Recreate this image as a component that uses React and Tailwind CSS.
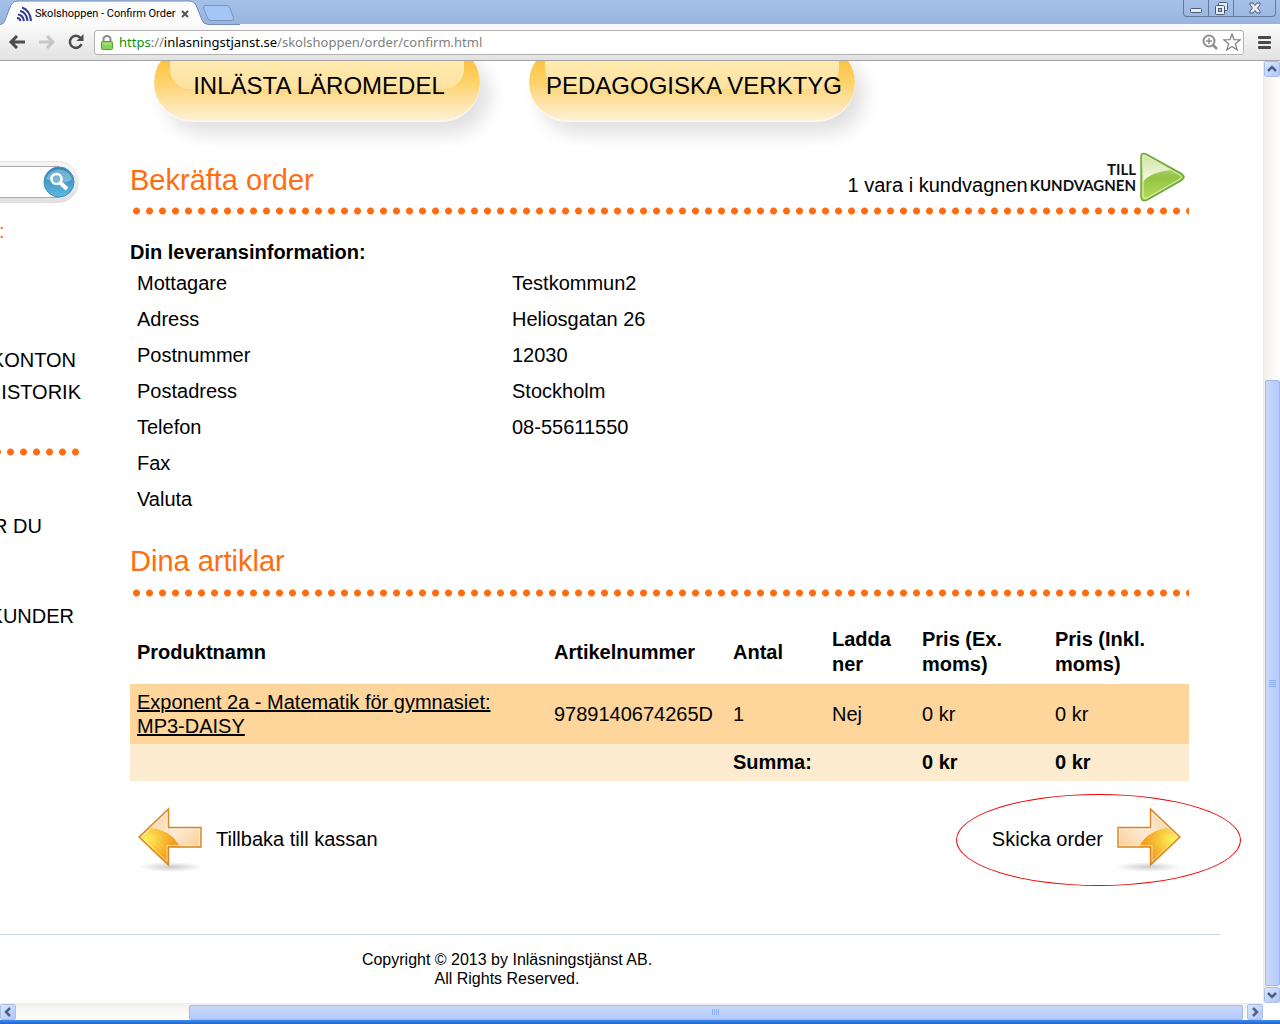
import React, { useState } from 'react';

const delivery = [
    ['Mottagare', 'Testkommun2'],
    ['Adress', 'Heliosgatan 26'],
    ['Postnummer', '12030'],
    ['Postadress', 'Stockholm'],
    ['Telefon', '08-55611550'],
    ['Fax', ''],
    ['Valuta', '']
];

const articles = [
    { name: 'Exponent 2a - Matematik för gymnasiet: MP3-DAISY', number: '9789140674265D', count: 1, download: 'Nej', exVat: '0 kr', incVat: '0 kr' }
];

function TitleBar() {
    return (
        <div className="h-6 flex items-start justify-between bg-linear-to-b from-[#a6c1e8] to-[#98b4de]">
            <div className="flex items-start">
                <div className="relative h-6 w-[206px]">
                    <svg className="absolute inset-0" width="240" height="25" viewBox="0 0 240 25" aria-hidden="true">
                        <path d="M0 25 C5 24 5 20 7 15 L11 5 Q13 1 17 1 H190 Q194 1 196 5 L202 20 Q203 24 208 25 Z" fill="#fbfbfb" />
                        <path d="M0 24.5 C5 24 5 20 7 15 L11 5 Q13 1 17 1 H190 Q194 1 196 5 L202 20 Q203 24 208 24.5 H240" fill="none" stroke="#6f8cb8" />
                        <path d="M206 5.500 H226 Q229 5.500 230 8 L233.500 18 Q234 20.500 231 20.500 H211 Q208.500 20.500 207.500 18 L203.500 8 Q203 5.500 206 5.500 Z" fill="#a3c6f7" stroke="#7894c0" />
                    </svg>
                    <div className="relative flex items-center h-6 pt-1 pl-4">
                        <svg width="16" height="16" viewBox="0 0 16 16" fill="none" stroke="#333c8f" strokeWidth="2" aria-hidden="true">
                            <path d="M1 12 Q4 12 4.500 15" />
                            <path d="M2 8.500 Q7 9 8 15" />
                            <path d="M4 5 Q10.500 6 11.500 15" />
                            <path d="M6 1.500 Q14 4 15 15" />
                        </svg>
                        <span className="ml-[3px] w-[138px] whitespace-nowrap font-['Roboto',sans-serif] text-[11px] leading-4 text-black">Skolshoppen - Confirm Order</span>
                        <button type="button" aria-label="Stäng flik" className="ml-2">
                            <svg width="8" height="8" viewBox="0 0 8 8" stroke="#555" strokeWidth="2"><path d="M1 1 L7 7 M7 1 L1 7" /></svg>
                        </button>
                    </div>
                </div>
            </div>
            <div className="flex h-[17px] mr-1 border border-t-0 border-[#64799b] rounded-b-sm divide-x divide-[#64799b]">
                <button type="button" aria-label="Minimera" className="w-[25px] flex items-center justify-center">
                    <svg width="12" height="12" viewBox="0 0 12 12"><rect x="0.500" y="6.500" width="11" height="4" rx="1" fill="#e6ecf5" stroke="#4a5870" /></svg>
                </button>
                <button type="button" aria-label="Återställ" className="w-[25px] flex items-center justify-center">
                    <svg width="13" height="13" viewBox="0 0 13 13" fill="#e6ecf5" stroke="#4a5870">
                        <rect x="3.500" y="0.500" width="9" height="8" rx="1" />
                        <rect x="0.500" y="3.500" width="9" height="9" rx="1" />
                        <rect x="3.500" y="6.500" width="3" height="3" fill="#a6c1e8" />
                    </svg>
                </button>
                <button type="button" aria-label="Stäng" className="w-[41px] flex items-center justify-center">
                    <svg width="12" height="12" viewBox="0 0 12 12">
                        <path d="M1 1 H4 L6 3.500 L8 1 H11 V3 L8.500 6 L11 9 V11 H8 L6 8.500 L4 11 H1 V9 L3.500 6 L1 3 Z" fill="#e6ecf5" stroke="#4a5870" />
                    </svg>
                </button>
            </div>
        </div>
    );
}

function Toolbar() {
    return (
        <div className="h-[37px] flex items-center pl-2 pr-[9px] bg-linear-to-b from-[#fbfbfb] to-[#e2e2e2] border-b border-[#a3a3a3]">
            <button type="button" aria-label="Tillbaka" className="w-[18px]">
                <svg width="18" height="14" viewBox="0 0 18 14" fill="none" stroke="#4d4d4d" strokeWidth="3"><path d="M17 7 H4 M9 1 L3 7 L9 13" /></svg>
            </button>
            <button type="button" aria-label="Framåt" className="ml-3 w-[18px]">
                <svg width="18" height="14" viewBox="0 0 18 14" fill="none" stroke="#c6c6c6" strokeWidth="3"><path d="M1 7 H14 M9 1 L15 7 L9 13" /></svg>
            </button>
            <button type="button" aria-label="Ladda om" className="ml-3 w-4">
                <svg width="16" height="16" viewBox="0 0 16 16">
                    <path d="M12.500 4 A6 6 0 1 0 13.500 10" fill="none" stroke="#4d4d4d" strokeWidth="2.500" />
                    <path d="M15.500 0 V7 H8.500 Z" fill="#4d4d4d" />
                </svg>
            </button>
            <div className="ml-[10px] flex-1 flex items-center h-[25px] pl-[6px] pr-[2px] bg-white border border-[#b3b3b3] rounded-[3px]">
                <svg width="12" height="15" viewBox="0 0 12 15" aria-hidden="true">
                    <path d="M2.500 7 V4 A3.500 3 0 0 1 9.500 4 V7" fill="none" stroke="#8c8c8c" strokeWidth="2" />
                    <rect x="0.500" y="6.500" width="11" height="8" rx="1" fill="#86d35c" stroke="#55a332" />
                    <path d="M2 9 H10" stroke="#b6ec98" />
                </svg>
                <div className="ml-[6px] flex-1 text-[13px] leading-5 text-[#808080] whitespace-nowrap">
                    <span className="text-[#0a950a]">https</span>://<span className="text-black">inlasningstjanst.se</span>/skolshoppen/order/confirm.html
                </div>
                <button type="button" aria-label="Zooma">
                    <svg width="16" height="16" viewBox="0 0 16 16" fill="none" stroke="#8f8f8f">
                        <circle cx="7" cy="7" r="5.500" strokeWidth="2" />
                        <path d="M4 7 H10 M7 4 V10" strokeWidth="1.500" />
                        <path d="M11 11 L15 15" strokeWidth="2.500" />
                    </svg>
                </button>
                <button type="button" aria-label="Bokmärk" className="ml-[5px]">
                    <svg width="18" height="18" viewBox="0 0 18 18" fill="white" stroke="#7d7d7d" strokeWidth="1.200">
                        <path d="M9 1 L11 6.700 L17.200 6.900 L12.300 10.700 L14.200 17 L9 13.400 L3.800 17 L5.700 10.700 L0.800 6.900 L7 6.700 Z" />
                    </svg>
                </button>
            </div>
            <button type="button" aria-label="Meny" className="ml-[14px] flex flex-col gap-[2px]">
                <span className="block w-[13px] h-[3px] rounded-[1px] bg-[#4a4a4a]" />
                <span className="block w-[13px] h-[3px] rounded-[1px] bg-[#4a4a4a]" />
                <span className="block w-[13px] h-[3px] rounded-[1px] bg-[#4a4a4a]" />
            </button>
        </div>
    );
}

function ScrollArrow({ label, d }) {
    return (
        <button type="button" aria-label={label} className="size-4 shrink-0 flex items-center justify-center rounded-[2px] border border-white bg-linear-to-br from-[#dbe6ff] to-[#b0c6f7] outline-1 -outline-offset-1 outline-[#a9bfec]">
            <svg width="10" height="10" viewBox="0 0 10 10" fill="none" stroke="#4d6185" strokeWidth="2.500"><path d={d} /></svg>
        </button>
    );
}

function VerticalScrollbar() {
    return (
        <div className="w-[17px] shrink-0 flex flex-col items-center border-l border-[#eeede5] bg-linear-to-r from-[#f3f1ec] to-[#fefefb]">
            <ScrollArrow label="Upp" d="M1 7 L5 3 L9 7" />
            <div className="grow-[304] basis-0" />
            <div className="grow-[605] basis-0 w-[15px] flex flex-col items-center justify-center gap-px rounded-[2px] border border-[#a0b8ea] bg-linear-to-r from-[#c9d7fc] to-[#b5cbfb]">
                <span className="w-[7px] h-px bg-[#8cb0f8]" />
                <span className="w-[7px] h-px bg-[#8cb0f8]" />
                <span className="w-[7px] h-px bg-[#8cb0f8]" />
                <span className="w-[7px] h-px bg-[#8cb0f8]" />
            </div>
            <div className="h-px" />
            <ScrollArrow label="Ned" d="M1 3 L5 7 L9 3" />
        </div>
    );
}

function HorizontalScrollbar() {
    return (
        <div className="flex h-[17px] bg-white">
            <div className="flex-1 flex items-center border-t border-[#eeede5] bg-linear-to-b from-[#f3f1ec] to-[#fefefb]">
                <ScrollArrow label="Vänster" d="M7 1 L3 5 L7 9" />
                <div className="grow-[173] basis-0" />
                <div className="grow-[1053] basis-0 h-[15px] flex items-center justify-center gap-px rounded-[2px] border border-[#a0b8ea] bg-linear-to-b from-[#c9d7fc] to-[#b5cbfb]">
                    <span className="h-[6px] w-px bg-[#8cb0f8]" />
                    <span className="h-[6px] w-px bg-[#8cb0f8]" />
                    <span className="h-[6px] w-px bg-[#8cb0f8]" />
                    <span className="h-[6px] w-px bg-[#8cb0f8]" />
                </div>
                <div className="w-1" />
                <ScrollArrow label="Höger" d="M3 1 L7 5 L3 9" />
            </div>
            <div className="w-[17px]" />
        </div>
    );
}

function PillButton({ children }) {
    return (
        <button type="button" className="relative w-[326px] h-[78px] rounded-full border-b-2 border-[#fdf6e6] bg-linear-to-b from-[#f9b800] via-[#fdd268] to-[#fef0d4] shadow-[10px_12px_18px_rgba(0,0,0,0.12)] text-2xl text-black whitespace-nowrap">
            <span className="absolute left-4 right-4 top-0 h-[45px] rounded-[20px] bg-linear-to-b from-[#fff0ba] to-[#fee2a0]" />
            <span className="relative flex items-center justify-center pt-2 pl-1">{children}</span>
        </button>
    );
}

function DottedLine() {
    return <div className="h-2 bg-[radial-gradient(circle,#ff6d10_3px,transparent_4px)] bg-[length:13px_8px] bg-repeat-x" />;
}

function ArrowIcon({ flip }) {
    const id = flip ? 'arrow-right' : 'arrow-left';
    return (
        <svg width="68" height="68" viewBox="0 0 68 68" aria-hidden="true">
            <defs>
                <linearGradient id={id + '-body'} x1="0" y1="0" x2="1" y2="1">
                    <stop offset="0" stopColor="#f9c88b" />
                    <stop offset="0.500" stopColor="#fdebd3" />
                    <stop offset="1" stopColor="#f8bd77" />
                </linearGradient>
                <radialGradient id={id + '-glow'} cx="0.200" cy="0.300" r="0.650">
                    <stop offset="0" stopColor="#fdee5c" />
                    <stop offset="1" stopColor="#f3a01c" />
                </radialGradient>
                <radialGradient id={id + '-shadow'}>
                    <stop offset="0" stopColor="#000" stopOpacity="0.200" />
                    <stop offset="1" stopColor="#000" stopOpacity="0" />
                </radialGradient>
            </defs>
            <g transform={flip ? 'translate(68 0) scale(-1 1)' : undefined}>
                <ellipse cx="35" cy="62" rx="33" ry="5" fill={`url(#${id}-shadow)`} />
                <path d="M3 32 L32.500 4 V22.500 H65 V42 H32.500 V60 Z" fill={`url(#${id}-body)`} />
                <path d="M3 32 L12 23 Q35 24 44 42 H32.500 V60 Z" fill={`url(#${id}-glow)`} />
                <path d="M5.500 32 L31 7.500 V24 H63.500 V40.500 H31 V56.500 Z" fill="none" stroke="#fff" strokeOpacity="0.600" />
                <path d="M3 32 L32.500 4 V22.500 H65 V42 H32.500 V60 Z" fill="none" stroke="#dd8424" strokeWidth="1.400" />
            </g>
        </svg>
    );
}

function Sidebar() {
    const [query, setQuery] = useState('');

    return (
        <aside className="w-[82px] shrink-0 overflow-hidden pt-[100px] text-xl leading-8 whitespace-nowrap">
            <form onSubmit={e => e.preventDefault()} className="mr-[3px] h-[42px] flex items-center pb-px pr-1 rounded-r-full bg-linear-to-b from-[#f6f6f6] to-[#e0e0e0] border-t border-[#e2e2e2]">
                <input
                    type="text"
                    aria-label="Sök"
                    className="min-w-0 flex-1 h-8 -mr-4 border-y border-[#a9a9a9] bg-white px-1 text-base"
                    value={query}
                    onChange={e => setQuery(e.target.value)}
                />
                <button type="submit" aria-label="Sök" className="shrink-0">
                    <svg width="32" height="32" viewBox="0 0 32 32">
                        <defs>
                            <linearGradient id="search-blue" x1="0" y1="0" x2="0" y2="1">
                                <stop offset="0" stopColor="#2f83b5" />
                                <stop offset="1" stopColor="#5bb9df" />
                            </linearGradient>
                        </defs>
                        <circle cx="16" cy="16" r="15" fill="url(#search-blue)" stroke="#3b8fbd" />
                        <path d="M3 13 A13.500 13.500 0 0 1 29 13 Q22 20 3 13 Z" fill="#fff" opacity="0.300" />
                        <circle cx="13.500" cy="13" r="5" fill="none" stroke="#fff" strokeWidth="2.500" />
                        <path d="M17.500 17 L24 23" stroke="#fff" strokeWidth="4" />
                    </svg>
                </button>
            </form>
            <p className="mt-3 -ml-px text-[#ff6d10]">:</p>
            <nav className="mt-[97px] flex flex-col items-end">
                <a href="#konton" className="mr-[6px]">KONTON</a>
                <a href="#historik" className="mr-px">ISTORIK</a>
            </nav>
            <div className="mt-10 mr-[2px]">
                <div className="h-2 bg-[radial-gradient(circle,#ff6d10_3px,transparent_4px)] bg-[length:13px_8px] bg-[position:4px_0] bg-repeat-x" />
            </div>
            <div className="mt-[54px] flex flex-col items-end">
                <a href="#du" className="mr-10">R DU</a>
                <a href="#kunder" className="mt-[58px] mr-2">KUNDER</a>
            </div>
        </aside>
    );
}

function CartLink() {
    return (
        <div className="flex items-center">
            <span className="pt-4 text-xl">1 vara i kundvagnen</span>
            <a href="#kundvagn" className="ml-[2px] mr-1 flex items-center gap-1">
                <span className="font-['Lato',sans-serif] font-bold text-[15px] leading-4 text-right text-[#111]">TILL<br />KUNDVAGNEN</span>
                <svg width="45" height="50" viewBox="0 0 45 50" aria-hidden="true">
                    <defs>
                        <linearGradient id="cart-green" x1="0" y1="0" x2="0" y2="1">
                            <stop offset="0" stopColor="#dcebb4" />
                            <stop offset="0.500" stopColor="#93c344" />
                            <stop offset="1" stopColor="#b4dc5c" />
                        </linearGradient>
                        <linearGradient id="cart-gloss" x1="0" y1="0" x2="0" y2="1">
                            <stop offset="0" stopColor="#cfe4a0" />
                            <stop offset="1" stopColor="#f6faec" />
                        </linearGradient>
                    </defs>
                    <path d="M1 5 Q1 0 6 2 L42 22 Q46 25 42 28 L7 48 Q1 50 1 45 Z" fill="url(#cart-green)" stroke="#6fa83a" strokeWidth="1.500" />
                    <path d="M3 6 Q3 3 6 4 L31 18 Q10 20 3 30 Z" fill="url(#cart-gloss)" />
                    <path d="M3 6 Q3 3 6 4 L40 23 Q43 25 40 27 L7 46 Q3 47 3 44 Z" fill="none" stroke="#e3f1c4" />
                </svg>
            </a>
        </div>
    );
}

function DeliveryInfo() {
    return (
        <section className="mt-[25px] text-xl leading-6">
            <h2 className="font-bold">Din leveransinformation:</h2>
            <table className="mt-px w-full table-fixed">
                <tbody>
                    {delivery.map(([label, value]) => (
                        <tr key={label} className="h-9">
                            <th scope="row" className="w-[375px] px-[7px] text-left font-normal">{label}</th>
                            <td className="px-[7px]">{value}</td>
                        </tr>
                    ))}
                </tbody>
            </table>
        </section>
    );
}

function ArticleTable() {
    return (
        <table className="mt-[23px] w-full table-fixed text-xl leading-6 text-left">
            <thead className="leading-[25px]">
                <tr className="h-16">
                    <th className="w-[417px] px-[7px]">Produktnamn</th>
                    <th className="w-[179px] px-[7px]">Artikelnummer</th>
                    <th className="w-[99px] px-[7px]">Antal</th>
                    <th className="w-[90px] px-[7px]">Ladda<br />ner</th>
                    <th className="w-[133px] px-[7px]">Pris (Ex.<br />moms)</th>
                    <th className="px-[7px]">Pris (Inkl.<br />moms)</th>
                </tr>
            </thead>
            <tbody>
                {articles.map(a => (
                    <tr key={a.number} className="h-[60px] bg-[#fed69c]">
                        <td className="px-[7px]"><a href="#artikel" className="underline">{a.name}</a></td>
                        <td className="px-[7px]">{a.number}</td>
                        <td className="px-[7px]">{a.count}</td>
                        <td className="px-[7px]">{a.download}</td>
                        <td className="px-[7px]">{a.exVat}</td>
                        <td className="px-[7px]">{a.incVat}</td>
                    </tr>
                ))}
            </tbody>
            <tfoot>
                <tr className="h-[37px] bg-[#fdebcf] font-bold">
                    <td colSpan={2} />
                    <td colSpan={2} className="px-[7px] pb-[2px]">Summa:</td>
                    <td className="px-[7px] pb-[2px]">0 kr</td>
                    <td className="px-[7px] pb-[2px]">0 kr</td>
                </tr>
            </tfoot>
        </table>
    );
}

export default function App() {
    return (
        <div className="min-h-screen flex flex-col bg-white font-['Noto_Sans',sans-serif]">
            <TitleBar />
            <Toolbar />
            <div className="flex-1 flex">
                <div className="flex-1 min-w-0 overflow-hidden font-['Liberation_Sans',Arial,sans-serif] text-black">
                    <div className="flex gap-12">
                        <Sidebar />
                        <main className="flex-1 min-w-0 mr-[74px]">
                            <nav className="h-[86px] overflow-hidden flex gap-[49px] pl-6">
                                <div className="-mt-[17px]"><PillButton>INLÄSTA LÄROMEDEL</PillButton></div>
                                <div className="-mt-[17px]"><PillButton>PEDAGOGISKA VERKTYG</PillButton></div>
                            </nav>
                            <div className="mt-[5px] mb-[5px] flex items-center justify-between">
                                <h1 className="pt-[6px] text-[29px] leading-9 text-[#ff6d10]">Bekräfta order</h1>
                                <CartLink />
                            </div>
                            <DottedLine />
                            <DeliveryInfo />
                            <h1 className="mt-[26px] mb-[10px] text-[29px] leading-9 text-[#ff6d10]">Dina artiklar</h1>
                            <DottedLine />
                            <ArticleTable />
                            <div className="mt-6 flex items-center justify-between text-xl">
                                <a href="#kassan" className="ml-[6px] flex items-center gap-3">
                                    <ArrowIcon />
                                    Tillbaka till kassan
                                </a>
                                <a href="#skicka" className="relative mr-[6px] flex items-center gap-3">
                                    Skicka order
                                    <ArrowIcon flip />
                                    <span className="absolute -left-9 -right-[58px] -top-[11px] h-[92px] rounded-[50%] border border-[#f00000]" />
                                </a>
                            </div>
                        </main>
                    </div>
                    <footer className="mt-[61px] mr-[43px] border-t border-[#c9d6e0] pt-[15px] pb-[15px] pr-[206px] text-center text-base leading-[19px]">
                        <p>Copyright © 2013 by Inläsningstjänst AB.</p>
                        <p>All Rights Reserved.</p>
                    </footer>
                </div>
                <VerticalScrollbar />
            </div>
            <HorizontalScrollbar />
            <div className="h-1 bg-linear-to-b from-[#3f8cf0] to-[#2463c8]" />
        </div>
    );
}
